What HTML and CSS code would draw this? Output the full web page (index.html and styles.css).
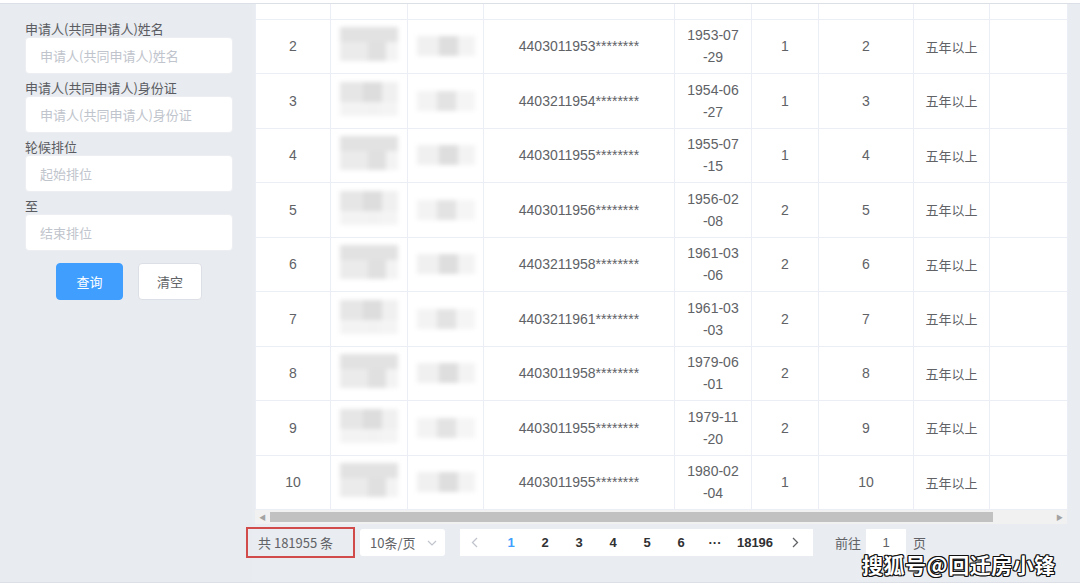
FILE: index.html
```html
<!DOCTYPE html>
<html lang="zh-CN">

<head>
    <meta charset="UTF-8">
    <meta name="viewport" content="width=device-width, initial-scale=1.0">
    <title>轮候排位查询</title>
    <link rel="stylesheet" href="styles.css">
</head>

<body>
    <div class="topbar"></div>
    <div class="main">
        <aside class="sidebar">
            <div class="field">
                <label>申请人(共同申请人)姓名</label>
                <input type="text" placeholder="申请人(共同申请人)姓名">
            </div>
            <div class="field">
                <label>申请人(共同申请人)身份证</label>
                <input type="text" placeholder="申请人(共同申请人)身份证">
            </div>
            <div class="field">
                <label>轮候排位</label>
                <input type="text" placeholder="起始排位">
            </div>
            <div class="field">
                <label>至</label>
                <input type="text" placeholder="结束排位">
            </div>
            <div class="actions">
                <button class="btn btn-primary">查询</button>
                <button class="btn">清空</button>
            </div>
        </aside>

        <section class="content">
            <div class="table-wrap">
                <table>
                    <colgroup>
                        <col style="width:75px">
                        <col style="width:77px">
                        <col style="width:76px">
                        <col style="width:191px">
                        <col style="width:77px">
                        <col style="width:67px">
                        <col style="width:95px">
                        <col style="width:76px">
                        <col style="width:78px">
                    </colgroup>
                    <tbody>
                        <tr class="row-cut">
                            <td></td><td></td><td></td><td></td><td></td><td></td><td></td><td></td><td></td>
                        </tr>
                        <tr>
                            <td>2</td>
                            <td><div class="blur-name"></div></td>
                            <td><div class="blur-id"></div></td>
                            <td>4403011953********</td>
                            <td class="date">1953-07<br>-29</td>
                            <td>1</td>
                            <td>2</td>
                            <td class="cn">五年以上</td>
                            <td></td>
                        </tr>
                        <tr>
                            <td>3</td>
                            <td><div class="blur-name"></div></td>
                            <td><div class="blur-id"></div></td>
                            <td>4403211954********</td>
                            <td class="date">1954-06<br>-27</td>
                            <td>1</td>
                            <td>3</td>
                            <td class="cn">五年以上</td>
                            <td></td>
                        </tr>
                        <tr>
                            <td>4</td>
                            <td><div class="blur-name"></div></td>
                            <td><div class="blur-id"></div></td>
                            <td>4403011955********</td>
                            <td class="date">1955-07<br>-15</td>
                            <td>1</td>
                            <td>4</td>
                            <td class="cn">五年以上</td>
                            <td></td>
                        </tr>
                        <tr>
                            <td>5</td>
                            <td><div class="blur-name"></div></td>
                            <td><div class="blur-id"></div></td>
                            <td>4403011956********</td>
                            <td class="date">1956-02<br>-08</td>
                            <td>2</td>
                            <td>5</td>
                            <td class="cn">五年以上</td>
                            <td></td>
                        </tr>
                        <tr>
                            <td>6</td>
                            <td><div class="blur-name"></div></td>
                            <td><div class="blur-id"></div></td>
                            <td>4403211958********</td>
                            <td class="date">1961-03<br>-06</td>
                            <td>2</td>
                            <td>6</td>
                            <td class="cn">五年以上</td>
                            <td></td>
                        </tr>
                        <tr>
                            <td>7</td>
                            <td><div class="blur-name"></div></td>
                            <td><div class="blur-id"></div></td>
                            <td>4403211961********</td>
                            <td class="date">1961-03<br>-03</td>
                            <td>2</td>
                            <td>7</td>
                            <td class="cn">五年以上</td>
                            <td></td>
                        </tr>
                        <tr>
                            <td>8</td>
                            <td><div class="blur-name"></div></td>
                            <td><div class="blur-id"></div></td>
                            <td>4403011958********</td>
                            <td class="date">1979-06<br>-01</td>
                            <td>2</td>
                            <td>8</td>
                            <td class="cn">五年以上</td>
                            <td></td>
                        </tr>
                        <tr>
                            <td>9</td>
                            <td><div class="blur-name"></div></td>
                            <td><div class="blur-id"></div></td>
                            <td>4403011955********</td>
                            <td class="date">1979-11<br>-20</td>
                            <td>2</td>
                            <td>9</td>
                            <td class="cn">五年以上</td>
                            <td></td>
                        </tr>
                        <tr>
                            <td>10</td>
                            <td><div class="blur-name"></div></td>
                            <td><div class="blur-id"></div></td>
                            <td>4403011955********</td>
                            <td class="date">1980-02<br>-04</td>
                            <td>1</td>
                            <td>10</td>
                            <td class="cn">五年以上</td>
                            <td></td>
                        </tr>
                    </tbody>
                </table>
                <div class="hscroll">
                    <span class="arrow">&#9664;</span>
                    <div class="thumb"></div>
                    <span class="spacer"></span>
                    <span class="arrow">&#9654;</span>
                </div>
            </div>

            <div class="pager-bar">
                <span class="total">共 181955 条</span>
                <div class="sizes">
                    <span>10条/页</span>
                    <svg class="caret" width="10" height="6" viewBox="0 0 10 6">
                        <path d="M1 1l4 4 4-4" fill="none" stroke="#c0c4cc" stroke-width="1.2" />
                    </svg>
                </div>
                <ul class="pager">
                    <li class="prev">
                        <svg width="7" height="11" viewBox="0 0 7 11">
                            <path d="M6 1L1.5 5.5 6 10" fill="none" stroke="#c0c4cc" stroke-width="1.3" />
                        </svg>
                    </li>
                    <li class="active">1</li>
                    <li>2</li>
                    <li>3</li>
                    <li>4</li>
                    <li>5</li>
                    <li>6</li>
                    <li>···</li>
                    <li class="last">18196</li>
                    <li class="next">
                        <svg width="7" height="11" viewBox="0 0 7 11">
                            <path d="M1 1l4.5 4.5L1 10" fill="none" stroke="#606266" stroke-width="1.3" />
                        </svg>
                    </li>
                </ul>
                <span class="jump">前往</span>
                <div class="jump-input">1</div>
                <span class="jump-unit">页</span>
            </div>
        </section>
    </div>
    <div class="bottombar"></div>
    <div class="watermark">搜狐号@回迁房小锋</div>
</body>

</html>
```

FILE: styles.css
```css
html,
body {
    margin: 0;
    padding: 0;
}

body {
    width: 1080px;
    height: 586px;
    overflow: hidden;
    background-color: #e9ecf1;
    font-family: "Liberation Sans", "Noto Sans CJK SC", sans-serif;
    color: #606266;
    position: relative;
}

.topbar {
    height: 3px;
    background-color: #fff;
    border-bottom: 1px solid #dcdfe6;
}

.bottombar {
    height: 3px;
    background-color: #fff;
    border-top: 1px solid #dcdfe6;
}

.main {
    height: 578px;
    display: flex;
}

/* 左側查詢欄 */
.sidebar {
    width: 252px;
    padding: 11px 0 0 25px;
    box-sizing: border-box;
    background-color: #e8ebf0;
}

.field {
    width: 208px;
    display: flex;
    flex-direction: column;
}

.field label {
    margin-top: 6px;
    font-size: 13px;
    line-height: 16px;
    color: #5a5c61;
    font-family: "Noto Sans CJK SC", sans-serif;
}

.field input {
    height: 37px;
    box-sizing: border-box;
    border: 1px solid #eceef2;
    border-radius: 4px;
    background-color: #fff;
    padding: 0 14px;
    font-size: 13px;
    font-family: "Noto Sans CJK SC", sans-serif;
    outline: none;
}

.field input::placeholder {
    color: #c0c4cc;
}

.actions {
    width: 208px;
    margin-top: 12px;
    display: flex;
    justify-content: center;
    gap: 15px;
}

.btn {
    height: 37px;
    width: 64px;
    border: 1px solid #dcdfe6;
    border-radius: 4px;
    background-color: #fff;
    color: #606266;
    font-size: 13px;
    font-family: "Noto Sans CJK SC", sans-serif;
    padding: 0;
}

.btn-primary {
    width: 67px;
    background-color: #409eff;
    border-color: #409eff;
    color: #fff;
}

/* 右側表格 */
.content {
    margin-left: 3px;
    flex: 1;
    display: flex;
    flex-direction: column;
}

.table-wrap {
    width: 812px;
    background-color: #fff;
}

table {
    width: 812px;
    border-collapse: collapse;
    table-layout: fixed;
}

td {
    height: 54.5px;
    padding: 0 6px;
    border-bottom: 1px solid #ebeef5;
    border-right: 1px solid #ebeef5;
    text-align: center;
    vertical-align: middle;
    font-size: 14px;
    color: #606266;
    box-sizing: border-box;
}

td:first-child {
    border-left: 1px solid #ebeef5;
}

.row-cut td {
    height: 15px;
}

td.date {
    line-height: 22px;
}

td.cn {
    font-size: 13px;
    font-family: "Noto Sans CJK SC", sans-serif;
}

.blur-name {
    width: 58px;
    height: 34px;
    margin: -4px auto 0;
    background:
        linear-gradient(180deg, rgba(255, 255, 255, 0) 60%, rgba(245, 245, 245, 0.9) 60%),
        linear-gradient(90deg, #e6e6e6 0 40%, #dddddd 40% 72%, #f0f0f0 72%);
    filter: blur(2px);
}

tr:nth-child(even) .blur-name {
    background:
        linear-gradient(180deg, #e2e2e2 0 45%, rgba(255, 255, 255, 0) 45%),
        linear-gradient(90deg, #ebebeb 0 48%, #e0e0e0 48% 80%, #f3f3f3 80%);
}

.blur-id {
    width: 58px;
    height: 20px;
    margin: 0 auto;
    background: linear-gradient(90deg, #f0f0f0 0 38%, #dedede 38% 70%, #f3f3f3 70%);
    filter: blur(2px);
}

tr:nth-child(odd) .blur-id {
    background: linear-gradient(90deg, #f3f3f3 0 35%, #e3e3e3 35% 68%, #f5f5f5 68%);
}

.hscroll {
    height: 14px;
    display: flex;
    align-items: center;
    background-color: #f1f1f1;
}

.hscroll .arrow {
    width: 15px;
    font-size: 7px;
    color: #a3a3a3;
    text-align: center;
}

.hscroll .thumb {
    width: 723px;
    height: 10px;
    background-color: #c1c1c1;
}

.hscroll .spacer {
    flex: 1;
}

/* 分頁 */
.pager-bar {
    margin-top: 3px;
    height: 31px;
    display: flex;
    align-items: center;
    font-size: 13px;
}

.total {
    margin-left: -9px;
    width: 109px;
    height: 31px;
    box-sizing: border-box;
    padding: 0 0 0 10px;
    border: 2px solid #d14b4b;
    display: flex;
    align-items: center;
    font-family: "Noto Sans CJK SC", sans-serif;
    color: #606266;
}

.sizes {
    margin-left: 5px;
    width: 85px;
    height: 27px;
    box-sizing: border-box;
    padding: 0 8px 0 10px;
    background-color: #fff;
    border-radius: 3px;
    display: flex;
    align-items: center;
    justify-content: space-between;
    font-family: "Noto Sans CJK SC", sans-serif;
}

.pager {
    list-style: none;
    margin: 0 0 0 15px;
    padding: 0;
    width: 353px;
    height: 27px;
    background-color: #fff;
    display: flex;
    align-items: center;
}

.pager li {
    width: 34px;
    text-align: center;
    font-weight: bold;
    color: #303133;
    font-size: 13px;
}

.pager li.last {
    width: 46px;
}

.pager li.next {
    width: 35px;
}

.pager li.active {
    color: #409eff;
}

.pager svg {
    display: block;
    margin: 0 auto;
}

.pager li.prev svg {
    margin: 0 0 0 11px;
}

.jump {
    margin-left: 22px;
    color: #606266;
    font-family: "Noto Sans CJK SC", sans-serif;
}

.jump-input {
    margin-left: 5px;
    width: 40px;
    height: 28px;
    line-height: 28px;
    background-color: #fff;
    text-align: center;
    color: #606266;
}

.jump-unit {
    margin-left: 7px;
    font-family: "Noto Sans CJK SC", sans-serif;
}

/* 浮水印 */
.watermark {
    position: absolute;
    left: 862px;
    top: 549px;
    font-family: "Noto Sans CJK SC", sans-serif;
    font-size: 21px;
    font-weight: bold;
    letter-spacing: 0.5px;
    color: #fff;
    text-shadow:
        -1px -1px 0 #111, 1px -1px 0 #111, -1px 1px 0 #111, 1px 1px 0 #111,
        0 -1px 0 #111, 0 1px 0 #111, -1px 0 0 #111, 1px 0 0 #111;
}
```
